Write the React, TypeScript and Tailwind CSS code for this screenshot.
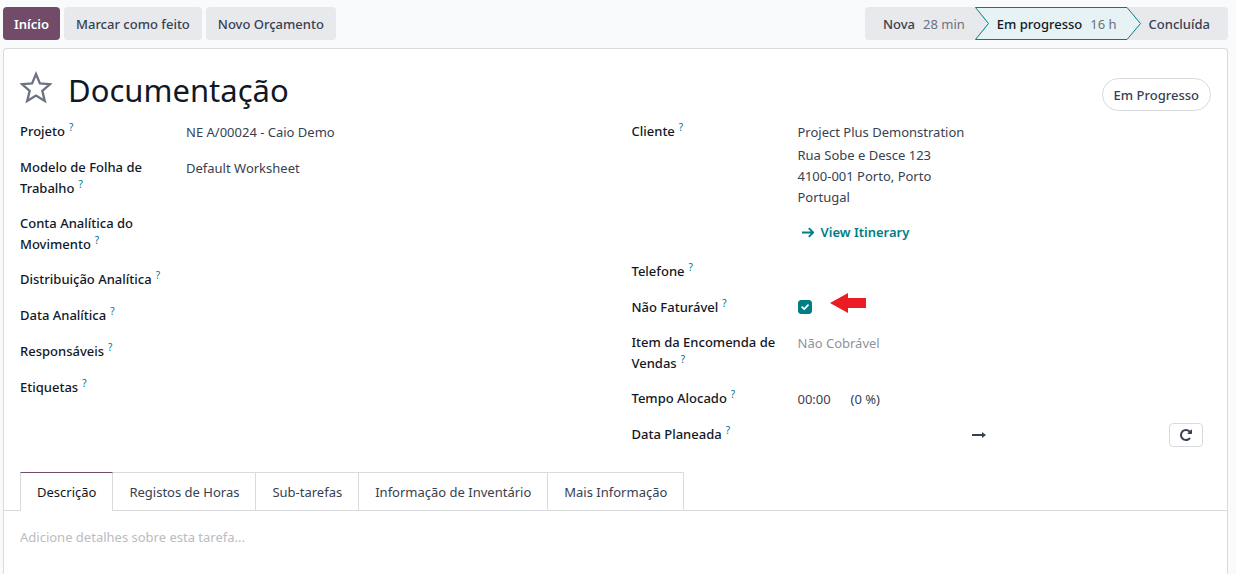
import type { ReactNode } from "react";

function Field({ label, id, children }: { label: string; id: string; children?: ReactNode }) {
  return (
    <div className="grid grid-cols-[150px_minmax(0,1fr)] gap-x-4 pb-[14px]">
      <label htmlFor={id} className="font-medium text-[#111827]">
        {label}
        <sup className="ml-1 text-[10px] leading-none font-normal text-[#01708a]">?</sup>
      </label>
      <div className="min-w-0">{children}</div>
    </div>
  );
}

const inputClass = "block h-[22px] w-full bg-transparent outline-none placeholder:text-[#8f939b]";

export default function App() {
  const tabs = ["Descrição", "Registos de Horas", "Sub-tarefas", "Informação de Inventário", "Mais Informação"];
  return (
    <div className="min-h-screen bg-[#f9fafb] pt-[7px] pr-2 pl-[3px] font-['Noto_Sans',sans-serif] text-[13px] leading-[21px] text-[#374151]">
      <header className="flex items-center justify-between">
        <div className="flex gap-1 font-medium">
          <button className="h-[33px] rounded bg-[#714b67] px-[11px] pt-0.5 font-semibold text-white">Início</button>
          <button className="h-[33px] rounded bg-[#e7e9ed] px-3 pt-0.5">Marcar como feito</button>
          <button className="h-[33px] rounded bg-[#e7e9ed] px-3 pt-0.5">Novo Orçamento</button>
        </div>
        <div className="flex h-[33px] overflow-hidden rounded bg-[#e7e9ed] font-medium">
          <button className="flex items-center gap-2 pt-0.5 pr-[10px] pl-[18px]">
            Nova <span className="font-normal text-[#6b7280]">28 min</span>
          </button>
          <button className="flex text-[#111827]">
            <svg width="14" height="33" viewBox="0 0 14 33" aria-hidden="true">
              <path d="M0 0H14V33H0L13.5 16.5Z" fill="#e6f2f3" />
              <path d="M14 .5H.5L13.5 16.5L.5 32.5H14" fill="none" stroke="#017e84" />
            </svg>
            <span className="flex h-[33px] items-center gap-2 border-y border-[#017e84] bg-[#e6f2f3] pt-0.5 pr-[10px] pl-2">
              Em progresso <span className="font-normal text-[#6b7280]">16 h</span>
            </span>
            <svg width="14" height="33" viewBox="0 0 14 33" aria-hidden="true">
              <path d="M0 0L13.5 16.5L0 33Z" fill="#e6f2f3" />
              <path d="M0 .5L13.5 16.5L0 32.5" fill="none" stroke="#017e84" />
            </svg>
          </button>
          <button className="pt-0.5 pr-[18px] pl-2">Concluída</button>
        </div>
      </header>

      <main className="mt-2 min-h-[calc(100vh-48px)] rounded-t border border-b-0 border-[#d8dadd] bg-white">
        <div className="flex items-start justify-between px-4 pt-5">
          <div className="flex items-start gap-4">
            <button aria-label="Favorito" className="pt-0.5">
              <svg width="32" height="32" viewBox="0 0 32 32" fill="none" stroke="#6b7280" strokeWidth="2.3" aria-hidden="true">
                <path d="M16 3L19.9 12.5L30 13.2L22.3 19.8L24.8 30L16 24.6L7.2 30L9.7 19.8L2 13.2L12.1 12.5Z" />
              </svg>
            </button>
            <h1 className="text-[31px] leading-[42px] text-[#111827]">Documentação</h1>
          </div>
          <button className="mt-[9px] h-[33px] rounded-full border border-[#d8dadd] px-[11px] pt-0.5 font-medium">Em Progresso</button>
        </div>

        <div className="grid grid-cols-2 gap-x-8 px-4 pt-[10px]">
          <div>
            <Field label="Projeto" id="projeto"><input id="projeto" className={inputClass} defaultValue="NE A/00024 - Caio Demo" /></Field>
            <Field label="Modelo de Folha de Trabalho" id="modelo"><input id="modelo" className={inputClass} defaultValue="Default Worksheet" /></Field>
            <Field label="Conta Analítica do Movimento" id="conta"><input id="conta" className={inputClass} /></Field>
            <Field label="Distribuição Analítica" id="distribuicao"><input id="distribuicao" className={inputClass} /></Field>
            <Field label="Data Analítica" id="data"><input id="data" className={inputClass} /></Field>
            <Field label="Responsáveis" id="responsaveis"><input id="responsaveis" className={inputClass} /></Field>
            <Field label="Etiquetas" id="etiquetas"><input id="etiquetas" className={inputClass} /></Field>
          </div>
          <div>
            <Field label="Cliente" id="cliente">
              <input id="cliente" className={inputClass} defaultValue="Project Plus Demonstration" />
              <address className="pt-0.5 not-italic">
                Rua Sobe e Desce 123<br />4100-001 Porto, Porto<br />Portugal
              </address>
              <a href="#itinerario" className="mt-[14px] mb-1 flex items-center gap-[7px] pl-1 font-semibold text-[#017e84]">
                <svg width="12" height="12" viewBox="0 0 12 12" fill="none" stroke="currentColor" strokeWidth="1.9" aria-hidden="true">
                  <path d="M0 5.5H11M6.8 1.1L11.2 5.5L6.8 9.9" />
                </svg>
                View Itinerary
              </a>
            </Field>
            <Field label="Telefone" id="telefone"><input id="telefone" className={inputClass} /></Field>
            <Field label="Não Faturável" id="faturavel">
              <div className="flex h-[19px] items-center gap-[18px]">
                <span className="grid">
                  <input id="faturavel" type="checkbox" defaultChecked className="peer col-start-1 row-start-1 size-[14px] appearance-none rounded-[3px] border border-[#d8dadd] checked:border-[#017e84] checked:bg-[#017e84]" />
                  <svg className="pointer-events-none invisible col-start-1 row-start-1 peer-checked:visible" width="14" height="14" viewBox="0 0 14 14" fill="none" stroke="white" strokeWidth="1.8" strokeLinecap="round" strokeLinejoin="round" aria-hidden="true">
                    <path d="M4.2 7.2L6.2 9.1L10 5.1" />
                  </svg>
                </span>
                <svg className="mb-2" width="36" height="20" viewBox="0 0 36 20" fill="#ec1c24" aria-hidden="true">
                  <path d="M0 10L18 0V5H36V15H18V20Z" />
                </svg>
              </div>
            </Field>
            <Field label="Item da Encomenda de Vendas" id="item"><input id="item" className={inputClass} placeholder="Não Cobrável" /></Field>
            <Field label="Tempo Alocado" id="tempo">
              <div className="flex items-center">
                <input id="tempo" className="h-[22px] w-[53px] bg-transparent outline-none" defaultValue="00:00" />
                <span>(0 %)</span>
              </div>
            </Field>
            <Field label="Data Planeada" id="planeada">
              <div className="flex h-[22px] items-center pr-2">
                <input id="planeada" className="h-[22px] w-[174px] bg-transparent outline-none" />
                <svg width="14" height="8" viewBox="0 0 14 8" fill="#374151" aria-hidden="true">
                  <path d="M0 3H10V1L14 4L10 7V5H0Z" />
                </svg>
                <input aria-label="Data final" className="h-[22px] min-w-0 flex-1 bg-transparent outline-none" />
                <button aria-label="Repetir" className="grid h-6 w-[34px] shrink-0 place-items-center rounded-sm border border-[#d8dadd]">
                  <svg width="12" height="12" viewBox="0 128 1536 1536" fill="#374151" aria-hidden="true">
                    <path d="M1536 256v448q0 26-19 45t-45 19h-448q-42 0-59-40-17-39 14-69l138-138q-148-137-349-137-104 0-198.5 40.5t-163.5 109.5-109.5 163.5-40.5 198.5 40.5 198.5 109.5 163.5 163.5 109.5 198.5 40.5q119 0 225-52t179-147q7-10 23-12 15 0 25 9l137 138q9 8 9.5 20.5t-7.5 22.5q-109 132-264 204.5t-327 72.5q-156 0-298-61t-245-164-164-245-61-298 61-298 164-245 245-164 298-61q147 0 284.5 55.5t244.5 156.5l130-129q29-31 70-14 39 17 39 59z" />
                  </svg>
                </button>
              </div>
            </Field>
          </div>
        </div>

        <div role="tablist" className="mt-3 flex border-b border-[#d8dadd] px-4">
          {tabs.map((tab, i) => (
            <button
              key={tab}
              role="tab"
              aria-selected={i === 0}
              className={
                i === 0
                  ? "-mb-px h-[39px] border-x border-t border-[#d8dadd] border-t-[#714b67] bg-white px-4 text-[#111827]"
                  : "h-[38px] border-t border-r border-[#d8dadd] px-4 pt-px"
              }
            >
              {tab}
            </button>
          ))}
        </div>
        <textarea
          aria-label="Descrição"
          className="block h-[46px] w-full resize-none px-4 pt-4 outline-none placeholder:text-[#b9bcc2]"
          placeholder="Adicione detalhes sobre esta tarefa..."
        />
      </main>
    </div>
  );
}
